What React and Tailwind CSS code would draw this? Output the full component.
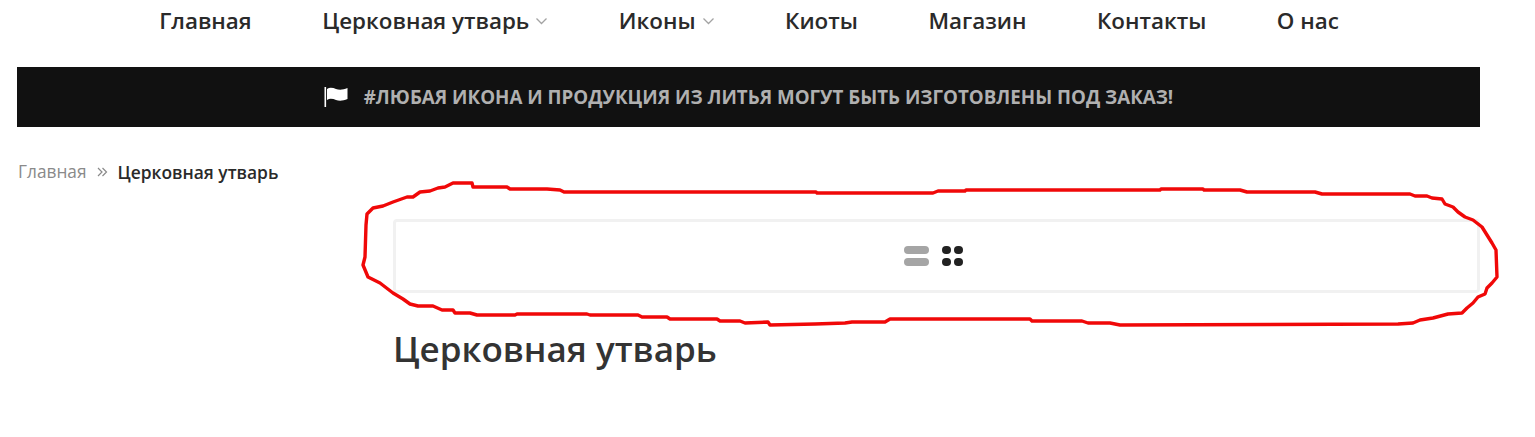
import React from 'react';

const NAV = [
  { label: 'Главная' },
  { label: 'Церковная утварь', caret: true },
  { label: 'Иконы', caret: true },
  { label: 'Киоты' },
  { label: 'Магазин' },
  { label: 'Контакты' },
  { label: 'О нас' },
];

// Red hand-drawn marker line over the toolbar
const SCRIBBLE = 'M367 214 L373 208 L383 206 L393 202 L407 197 L413 197 L420 192 L430 191 L438 188 L445 187 L453 183 L472 183 L473 187 L507 187 L510 189 L547 189 L560 190 L564 192 L816 192 L817 193 L933 193 L938 191 L965 191 L966 190 L1160 190 L1161 189 L1203 189 L1204 190 L1240 190 L1247 192 L1315 192 L1322 194 L1410 194 L1415 196 L1427 196 L1432 198 L1442 199 L1445 204 L1453 207 L1458 212 L1465 217 L1473 220 L1482 227 L1487 235 L1492 243 L1496 250 L1497 277 L1492 283 L1487 288 L1485 294 L1478 297 L1473 303 L1467 308 L1462 313 L1448 314 L1433 318 L1420 320 L1413 323 L1398 324 L1120 325 L1110 323 L1088 323 L1082 321 L1032 321 L1030 319 L890 319 L885 322 L852 322 L845 323 L815 324 L770 325 L768 322 L745 323 L740 321 L720 321 L717 319 L670 319 L667 317 L642 317 L638 315 L590 315 L587 314 L517 314 L515 315 L477 315 L470 313 L455 313 L453 310 L442 310 L433 306 L418 306 L410 304 L403 299 L393 293 L380 283 L368 277 L363 265 L365 257 L366 225 Z';

function App() {
  return (
    <div className="relative h-[437px] overflow-hidden bg-white font-['Open_Sans',sans-serif]">
      <nav className="flex h-[67px] items-start justify-center gap-[70.5px] pr-[37px] pt-[5px] text-[22.4px] leading-[32px] font-semibold text-[#2a2a2a]">
        {NAV.map((item) => (
          <div key={item.label} className="flex items-center gap-[6px]">
            <span>{item.label}</span>
            {item.caret && (
              <svg width="13" height="8" viewBox="0 0 13 8" fill="none" stroke="#a3a3a3" strokeWidth="1.3">
                <path d="M1.5 1.5 L6.5 6.5 L11.5 1.5" />
              </svg>
            )}
          </div>
        ))}
      </nav>

      <div className="mx-[17px] flex h-[60px] w-[1463px] items-center justify-center gap-[16px] bg-[#111111]">
        <svg width="24" height="22" viewBox="0 0 24 22">
          <rect x="0.5" y="1" width="1.6" height="20" fill="#ffffff" />
          <path d="M3 3 C6 1 9 2 12 3 C15 4 19 4 23.5 2 L23.5 13 C19 15 15 15 12 14 C9 13 6 12 3 14 Z" fill="#ffffff" />
        </svg>
        <span className="text-[18.75px] font-bold text-[#b0b0b0]">#ЛЮБАЯ ИКОНА И ПРОДУКЦИЯ ИЗ ЛИТЬЯ МОГУТ БЫТЬ ИЗГОТОВЛЕНЫ ПОД ЗАКАЗ!</span>
      </div>

      <div className="ml-[18px] mt-[33px] flex h-[24px] items-center leading-[24px]">
        <span className="text-[17.3px] text-[#8a8a8a]">Главная</span>
        <svg className="mx-[10px]" width="11" height="10" viewBox="0 0 11 10" fill="none" stroke="#8a8a8a" strokeWidth="1.2">
          <path d="M1 1 L5 5 L1 9 M5.5 1 L9.5 5 L5.5 9" />
        </svg>
        <span className="text-[17.4px] font-semibold text-[#2a2a2a]">Церковная утварь</span>
      </div>

      <div className="ml-[393px] mt-[35px] w-[1087px]">
        <div className="flex h-[74px] items-center justify-center gap-[13px] rounded-[4px] border-[3px] border-[#f1f1f1] pr-[6px]">
          <div className="flex flex-col gap-[4px]">
            <div className="h-[8px] w-[25px] rounded-[4px] bg-[#a5a5a5]" />
            <div className="h-[8px] w-[25px] rounded-[4px] bg-[#a5a5a5]" />
          </div>
          <div className="grid grid-cols-2 gap-x-[3px] gap-y-[4px]">
            <div className="h-[8px] w-[9px] rounded-[4px] bg-[#222222]" />
            <div className="h-[8px] w-[9px] rounded-[4px] bg-[#222222]" />
            <div className="h-[8px] w-[9px] rounded-[4px] bg-[#222222]" />
            <div className="h-[8px] w-[9px] rounded-[4px] bg-[#222222]" />
          </div>
        </div>
        <h1 className="mt-[34px] text-[35px] leading-[44px] font-semibold text-[#333333]">Церковная утварь</h1>
      </div>

      <svg className="absolute left-0 top-0" width="1535" height="437" fill="none">
        <path d={SCRIBBLE} stroke="#f00808" strokeWidth="3.4" strokeLinejoin="round" />
      </svg>
    </div>
  );
}

export default App;
